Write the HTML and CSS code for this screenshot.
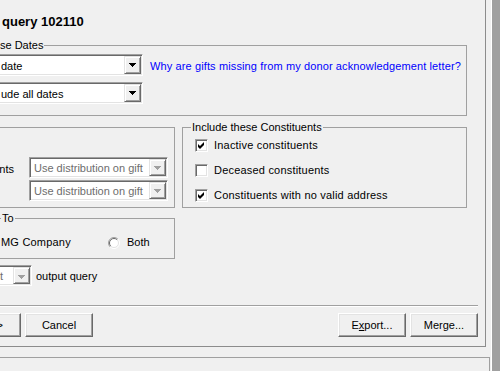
FILE: index.html
```html
<!DOCTYPE html>
<html lang="en">
<head>
    <meta charset="UTF-8">
    <meta name="viewport" content="width=device-width, initial-scale=1.0">
    <title>Export query 102110</title>
    <link rel="stylesheet" href="styles.css">
</head>
<body>
    <div class="screen">
        <div class="main">
            <div class="dialog">
                <h1 class="title">query 102110</h1>

                <fieldset class="group dates">
                    <legend>se Dates</legend>
                    <div class="date-row">
                        <div class="combo wide">
                            <span class="combo-text">date</span>
                            <span class="combo-btn"><svg width="7" height="4" viewBox="0 0 7 4"><path d="M0 0h7v1H0zM1 1h5v1H1zM2 2h3v1H2zM3 3h1v1H3z"/></svg></span>
                        </div>
                        <a class="help-link" href="#">Why are gifts missing from my donor acknowledgement letter?</a>
                    </div>
                    <div class="combo wide second">
                        <span class="combo-text">ude all dates</span>
                        <span class="combo-btn"><svg width="7" height="4" viewBox="0 0 7 4"><path d="M0 0h7v1H0zM1 1h5v1H1zM2 2h3v1H2zM3 3h1v1H3z"/></svg></span>
                    </div>
                </fieldset>

                <div class="group-row">
                    <fieldset class="group distrib">
                        <div class="field-row">
                            <span class="field-label">nts</span>
                            <div class="combo mid disabled">
                                <span class="combo-text">Use distribution on gift</span>
                                <span class="combo-btn"><svg width="7" height="4" viewBox="0 0 7 4"><path d="M0 0h7v1H0zM1 1h5v1H1zM2 2h3v1H2zM3 3h1v1H3z"/></svg></span>
                            </div>
                        </div>
                        <div class="field-row">
                            <span class="field-label"></span>
                            <div class="combo mid disabled">
                                <span class="combo-text">Use distribution on gift</span>
                                <span class="combo-btn"><svg width="7" height="4" viewBox="0 0 7 4"><path d="M0 0h7v1H0zM1 1h5v1H1zM2 2h3v1H2zM3 3h1v1H3z"/></svg></span>
                            </div>
                        </div>
                    </fieldset>

                    <fieldset class="group constituents">
                        <legend>Include these Constituents</legend>
                        <div class="checks">
                            <label class="check"><span class="box"><svg width="11" height="11" viewBox="0 0 11 11"><path d="M2 4L4 6L8 2L8 5L4 9L2 7Z"/></svg></span>Inactive constituents</label>
                            <label class="check"><span class="box"></span>Deceased constituents</label>
                            <label class="check"><span class="box"><svg width="11" height="11" viewBox="0 0 11 11"><path d="M2 4L4 6L8 2L8 5L4 9L2 7Z"/></svg></span>Constituents with no valid address</label>
                        </div>
                    </fieldset>
                </div>

                <fieldset class="group send-to">
                    <legend>To</legend>
                    <div class="radio-row">
                        <span class="radio-label">MG Company</span>
                        <label class="radio">
                            <svg width="12" height="12" viewBox="0 0 12 12">
                                <circle cx="6" cy="6" r="5" fill="#fff"/>
                                <path d="M2.1 9.9A5.5 5.5 0 0 1 9.9 2.1" fill="none" stroke="#a0a0a0"/>
                                <path d="M2.8 9.2A4.5 4.5 0 0 1 9.2 2.8" fill="none" stroke="#696969"/>
                                <path d="M2.1 9.9A5.5 5.5 0 0 0 9.9 2.1" fill="none" stroke="#fff"/>
                                <path d="M2.8 9.2A4.5 4.5 0 0 0 9.2 2.8" fill="none" stroke="#e3e3e3"/>
                            </svg>
                            Both
                        </label>
                    </div>
                </fieldset>

                <div class="output-row">
                    <div class="combo small disabled">
                        <span class="combo-text cut">t</span>
                        <span class="combo-btn"><svg width="7" height="4" viewBox="0 0 7 4"><path d="M0 0h7v1H0zM1 1h5v1H1zM2 2h3v1H2zM3 3h1v1H3z"/></svg></span>
                    </div>
                    <span>output query</span>
                </div>

                <div class="separator"></div>

                <div class="buttons">
                    <button class="btn btn-first">&gt;</button>
                    <button class="btn">Cancel</button>
                    <span class="spacer"></span>
                    <button class="btn">E<u>x</u>port...</button>
                    <button class="btn">Merge...</button>
                </div>
            </div>
            <div class="status"></div>
        </div>
        <div class="edge"></div>
    </div>
</body>
</html>
```

FILE: styles.css
```css
body {
    margin: 0;
    background-color: #f0f0f0;
    font-family: "Liberation Sans", Arial, sans-serif;
    font-size: 11px;
    line-height: 13px;
    color: #000;
    overflow: hidden;
}
.screen {
    display: flex;
    width: 500px;
    height: 371px;
}
.main {
    width: 491px;
    display: flex;
    flex-direction: column;
}
.edge {
    flex: 1;
    background-color: #a0a0a0;
    border-left: 1px solid #fff;
}
.dialog {
    width: 485px;
    padding-top: 14px;
    padding-bottom: 9px;
    border-right: 1px solid #8c8c8c;
    border-bottom: 1px solid #8c8c8c;
}
.status {
    flex: 1;
    width: 489px;
    margin-top: 10px;
    border-top: 1px solid #a0a0a0;
    border-right: 1px solid #a0a0a0;
}
.title {
    margin: 0 0 0 2px;
    font-size: 13px;
    line-height: 15px;
    font-weight: bold;
}

/* group boxes */
.group {
    box-sizing: border-box;
    margin: 0;
    min-width: 0;
    border: 1px solid #a0a0a0;
}
.group legend {
    padding: 0 1px;
    line-height: 13px;
}
.dates {
    width: 497px;
    margin: 10px 0 0 -30px;
    padding: 2px 0 11px 25px;
}
.dates legend {
    margin-left: 3px;
}
.date-row {
    display: flex;
    align-items: center;
}
.help-link {
    margin: 3px 0 0 7px;
    color: #0000ff;
    text-decoration: none;
    letter-spacing: 0.12px;
}
.group-row {
    display: flex;
    align-items: flex-start;
    gap: 7px;
    margin: 5px 0 0 -60px;
}
.distrib {
    flex-shrink: 0;
    width: 235px;
    margin-top: 6px;
    padding: 29px 6px 6px 10px;
}
.field-row {
    display: flex;
    align-items: center;
}
.field-row + .field-row {
    margin-top: 2px;
}
.field-label {
    width: 63px;
    margin-right: 15px;
    padding-top: 3px;
    text-align: right;
}
.constituents {
    flex-shrink: 0;
    width: 285px;
    padding: 5px 0 5px 8px;
}
.checks {
    display: flex;
    flex-direction: column;
    gap: 12px;
    padding-left: 4px;
}
.check {
    display: flex;
    align-items: center;
    height: 13px;
    letter-spacing: 0.2px;
}
.box {
    box-sizing: border-box;
    width: 13px;
    height: 13px;
    margin-right: 6px;
    background-color: #fff;
    border: 1px solid;
    border-color: #a0a0a0 #fff #fff #a0a0a0;
    box-shadow: inset 1px 1px #696969, inset -1px -1px #e3e3e3;
}
.box svg {
    display: block;
}
.send-to {
    width: 215px;
    margin: 4px 0 0 -40px;
    padding: 11px 0 9px 40px;
}
.radio-row {
    display: flex;
    align-items: center;
    height: 13px;
}
.radio-label {
    width: 107px;
    letter-spacing: 0.2px;
}
.radio {
    display: flex;
    align-items: center;
    gap: 7px;
}
.radio svg {
    display: block;
}

/* combo boxes */
.combo {
    box-sizing: border-box;
    display: flex;
    align-items: center;
    height: 22px;
    padding: 1px;
    background-color: #fff;
    border: 1px solid;
    border-color: #a0a0a0 #fff #fff #a0a0a0;
    box-shadow: inset 1px 1px #696969, inset -1px -1px #e3e3e3;
}
.combo.wide {
    width: 147px;
}
.combo.second {
    margin-top: 6px;
}
.combo.mid {
    width: 139px;
    height: 21px;
}
.combo.small {
    width: 46px;
    height: 21px;
    margin-left: -14px;
}
.combo-text {
    flex: 1;
    padding: 2px 0 0 3px;
    white-space: nowrap;
    overflow: hidden;
}
.combo-text.cut {
    padding-left: 12px;
}
.combo-btn {
    box-sizing: border-box;
    display: flex;
    align-items: center;
    justify-content: center;
    width: 17px;
    height: 100%;
    background-color: #f0f0f0;
    border: 1px solid;
    border-color: #e3e3e3 #696969 #696969 #e3e3e3;
    box-shadow: inset 1px 1px #fff, inset -1px -1px #a0a0a0;
}
.combo-btn svg {
    display: block;
}
.disabled .combo-text {
    color: #6d6d6d;
}
.disabled .combo-btn svg {
    fill: #a0a0a0;
}
.output-row {
    display: flex;
    align-items: center;
    gap: 4px;
    margin-top: 6px;
}
.output-row span {
    padding-top: 2px;
}

/* bottom buttons */
.separator {
    margin: 19px 7px 0 -20px;
    border-top: 1px solid #a0a0a0;
    border-bottom: 1px solid #fff;
}
.buttons {
    display: flex;
    gap: 5px;
    margin: 6px 7px 0 -47px;
}
.spacer {
    flex: 1;
}
.buttons .btn + .btn {
    margin-left: -1px;
}
.btn {
    box-sizing: border-box;
    width: 68px;
    height: 24px;
    padding: 0;
    font-family: "Liberation Sans", Arial, sans-serif;
    font-size: 11px;
    color: #000;
    background-color: #f0f0f0;
    border: 1px solid;
    border-color: #fff #696969 #696969 #fff;
    box-shadow: inset -1px -1px #a0a0a0, inset 1px 1px #e3e3e3;
}
.btn-first {
    text-align: right;
    padding-right: 17px;
}
```
